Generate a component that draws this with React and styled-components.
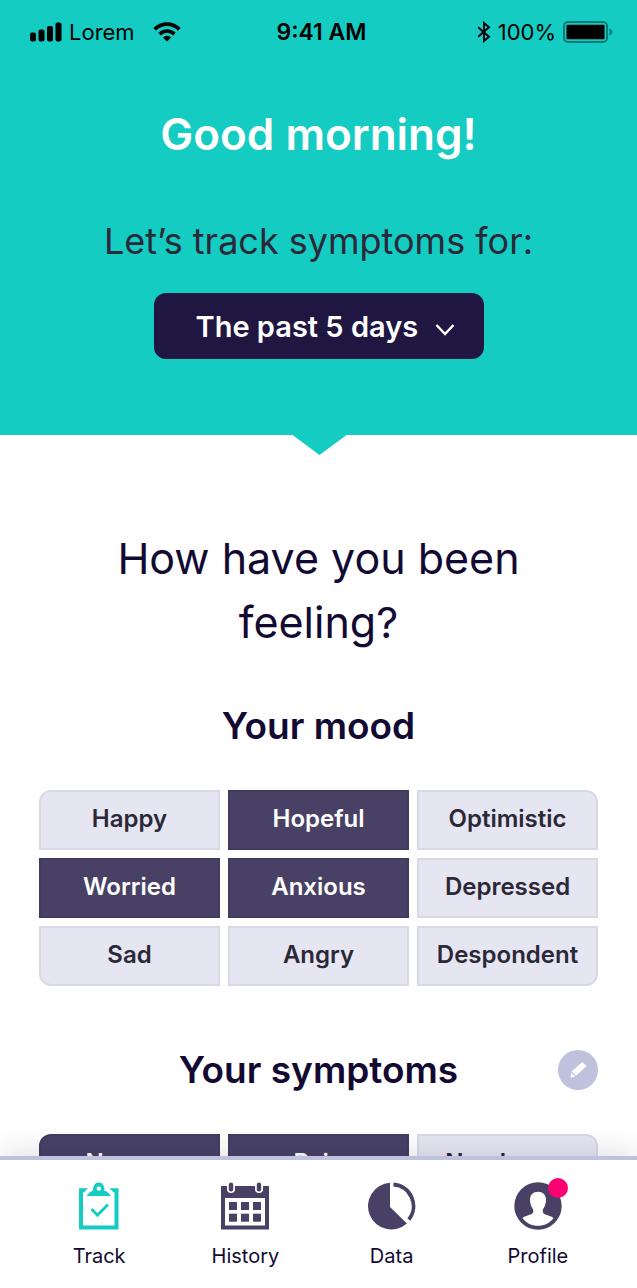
import React, { useState } from "react";
import styled, { createGlobalStyle } from "styled-components";

const color = {
  teal: "#14ccc2",
  ink: "#130a33",
  navy: "#1f1642",
  plum: "#484165",
  charcoal: "#2b2838",
  lilac: "#e6e6f2",
  line: "#d9d8e5",
  periwinkle: "#bfc2dc",
  pink: "#ff0073",
};

const GlobalStyle = createGlobalStyle`
  *, *::before, *::after { box-sizing: border-box; }
  body {
    margin: 0;
    background: #fff;
    color: ${color.ink};
    font-family: Inter, "Liberation Sans", sans-serif;
  }
  h1, h2, h3, p { margin: 0; }
  button, select { font: inherit; }
`;

const Screen = styled.div`
  display: flex;
  flex-direction: column;
  height: 100vh;
  background: #fff;
`;

const Scroller = styled.main`
  flex: 1;
  min-height: 0;
  overflow-y: auto;
  scrollbar-width: none;
`;

const Hero = styled.header`
  position: relative;
  display: flex;
  flex-direction: column;
  align-items: center;
  padding-bottom: 76px;
  background: ${color.teal};

  &::after {
    content: "";
    position: absolute;
    top: 100%;
    left: 50%;
    width: 54px;
    height: 20px;
    margin-left: -26px;
    background: ${color.teal};
    clip-path: polygon(0 0, 100% 0, 50% 100%);
  }
`;

const StatusBar = styled.div`
  align-self: stretch;
  display: grid;
  grid-template-columns: 1fr auto 1fr;
  align-items: center;
  height: 64px;
  padding: 0 24px 0 30px;
  color: #000;
  font-size: 22px;
  line-height: 32px;
`;

const StatusGroup = styled.div`
  display: flex;
  align-items: center;
  justify-content: ${(p) => (p.$end ? "flex-end" : "flex-start")};
  gap: 7px;
`;

const Carrier = styled.span`
  margin-right: 11px;
`;

const Clock = styled.time`
  font-size: 23px;
  font-weight: 600;
`;

const Greeting = styled.h1`
  margin-top: 42px;
  color: #fff;
  font-size: 44px;
  font-weight: 600;
  line-height: 56px;
`;

const Prompt = styled.label`
  margin-top: 55px;
  color: ${color.charcoal};
  font-size: 36px;
  line-height: 48px;
`;

const PeriodField = styled.div`
  position: relative;
  width: 330px;
  max-width: 100%;
  margin-top: 28px;
`;

const PeriodSelect = styled.select`
  appearance: none;
  display: block;
  width: 100%;
  height: 66px;
  padding: 0 60px 0 42px;
  border: 0;
  border-radius: 12px;
  background: ${color.navy};
  color: #fff;
  font-size: 29px;
  font-weight: 600;
`;

const PeriodChevron = styled.svg`
  position: absolute;
  top: 30px;
  right: 29px;
  pointer-events: none;
`;

const Content = styled.div`
  padding: 91px 39px 40px;
`;

const Question = styled.h2`
  max-width: 460px;
  margin: 0 auto 48px;
  font-size: 43px;
  font-weight: 400;
  line-height: 64px;
  text-align: center;
`;

const Section = styled.section`
  & + & {
    margin-top: 60px;
  }
`;

const SectionHead = styled.div`
  display: grid;
  grid-template-columns: 40px 1fr 40px;
  align-items: center;
  margin-bottom: 40px;
`;

const SectionTitle = styled.h3`
  grid-column: 2;
  font-size: 37px;
  font-weight: 600;
  line-height: 48px;
  text-align: center;
`;

const EditButton = styled.button`
  display: block;
  width: 40px;
  height: 40px;
  padding: 0;
  border: 0;
  border-radius: 50%;
  background: ${color.periwinkle};
`;

const ChipGrid = styled.div`
  display: grid;
  grid-template-columns: repeat(3, 1fr);
  gap: 8px;
`;

const Chip = styled.button`
  height: 60px;
  padding: 0 0 2px;
  border: 2px solid ${(p) => (p.$on ? "#433c60" : color.line)};
  background: ${(p) => (p.$on ? color.plum : color.lilac)};
  color: ${(p) => (p.$on ? "#fff" : color.charcoal)};
  font-size: 24px;
  font-weight: 600;
  line-height: 32px;

  &:nth-child(1) { border-top-left-radius: 12px; }
  &:nth-child(3) { border-top-right-radius: 12px; }
  &:nth-last-child(3) { border-bottom-left-radius: 12px; }
  &:last-child { border-bottom-right-radius: 12px; }
`;

const TabBar = styled.nav`
  position: relative;
  display: grid;
  grid-template-columns: repeat(4, 1fr);
  padding: 22px 26px 18px;
  border-top: 4px solid ${color.periwinkle};
  background: #fff;
  box-shadow: 0 0 30px rgba(31, 22, 66, 0.16);
`;

const Tab = styled.a`
  display: flex;
  flex-direction: column;
  align-items: center;
  gap: 12px;
  color: ${color.ink};
  font-size: 20px;
  line-height: 28px;
  text-decoration: none;
`;

const TabIcon = styled.span`
  position: relative;
  display: block;
  width: 48px;
  height: 48px;
  color: ${(p) => (p.$active ? color.teal : color.plum)};

  svg { display: block; }
`;

const Dot = styled.span`
  position: absolute;
  top: -4px;
  right: -6px;
  width: 20px;
  height: 20px;
  border-radius: 50%;
  background: ${color.pink};
`;

const SignalIcon = () => (
  <svg width="32" height="20" viewBox="0 0 32 20" aria-hidden="true">
    <rect x="0" y="10.5" width="6" height="9" rx="2" />
    <rect x="8.5" y="7.5" width="6" height="12" rx="2" />
    <rect x="17" y="4" width="6" height="15.5" rx="2" />
    <rect x="25.5" y="0.5" width="6" height="19" rx="2" />
  </svg>
);

const WifiIcon = () => (
  <svg width="28" height="20" viewBox="0 0 28 20" aria-hidden="true">
    <g fill="none" stroke="#000">
      <path d="M1.7 7.3A17.3 17.3 0 0 1 26.3 7.3" strokeWidth="3.8" />
      <path d="M6.6 12.1A10.5 10.5 0 0 1 21.4 12.1" strokeWidth="3.6" />
    </g>
    <path d="M14 19.5L9.9 15.5A5.7 5.7 0 0 1 18.1 15.5Z" />
  </svg>
);

const BluetoothIcon = () => (
  <svg width="14" height="22" viewBox="0 0 14 22" aria-hidden="true">
    <path
      d="M1.2 6.2L12 15.7L7 20V2L12 6.3L1.2 15.8"
      fill="none"
      stroke="#000"
      strokeWidth="1.9"
    />
  </svg>
);

const BatteryIcon = () => (
  <svg width="50" height="22" viewBox="0 0 50 22" aria-hidden="true">
    <rect x="1" y="1" width="43" height="20" rx="4" fill="none" stroke="#000" strokeOpacity="0.4" strokeWidth="2" />
    <rect x="3.5" y="3.7" width="38" height="14.6" rx="1" />
    <path d="M46.5 7.5C50.2 8.5 50.2 13.5 46.5 14.5Z" fillOpacity="0.4" />
  </svg>
);

const PencilIcon = () => (
  <svg width="40" height="40" viewBox="0 0 40 40" fill="#fff" aria-hidden="true">
    <path d="M13.7 21.4L23.6 12.4Q24.2 11.9 24.8 12.4L28 15.3Q28.5 15.9 28 16.4L18 25.7Z" />
    <path d="M12.9 22.6L17.2 26.7L13.4 27.4Q12.8 27.4 12.8 26.8Z" />
  </svg>
);

const TrackIcon = () => (
  <svg width="48" height="48" viewBox="0 0 48 48" fill="currentColor" aria-hidden="true">
    <path d="M4 6.2H13L9 10.2H8V43.4H39.5V10.2H38.5L34.5 6.2H43.5V47.4H4Z" />
    <path
      fillRule="evenodd"
      d="M11.500 14Q15 9.300 18 8.700C18 3.800 20 0.600 23.800 0.600S29.500 3.800 29.500 8.700Q32.500 9.300 36 14ZM23.800 4.400A2.200 2.200 0 1 0 23.800 8.800A2.200 2.200 0 1 0 23.800 4.400Z"
    />
    <path d="M16.5 27L22.5 33.3L33 22.5" fill="none" stroke="currentColor" strokeWidth="2.8" />
  </svg>
);

const HistoryIcon = () => (
  <svg width="48" height="48" viewBox="0 0 48 48" fill="currentColor" aria-hidden="true">
    <path fillRule="evenodd" d="M0 4H48V47.4H0ZM4 16V43.4H44V16Z" />
    <g fill="#fff">
      <rect x="6" y="-2" width="8" height="13" rx="4" />
      <rect x="34" y="-2" width="8" height="13" rx="4" />
    </g>
    <rect x="7.8" y="0.5" width="4.4" height="9" rx="2.2" />
    <rect x="35.8" y="0.5" width="4.4" height="9" rx="2.2" />
    {[8, 20, 32].map((x) =>
      [20, 31.7].map((y) => <rect key={`${x}-${y}`} x={x} y={y} width="8" height="8" />)
    )}
  </svg>
);

const DataIcon = () => (
  <svg width="48" height="48" viewBox="0 0 48 48" aria-hidden="true">
    <path d="M22 0.7A23.4 23.4 0 1 0 38.9 41.6L22 25Z" fill="currentColor" />
    <path d="M25.5 2.5A21.6 21.6 0 0 1 40.8 37.5" fill="none" stroke="currentColor" strokeWidth="3.8" />
  </svg>
);

const ProfileIcon = () => (
  <svg width="48" height="48" viewBox="0 0 48 48" aria-hidden="true">
    <circle cx="24" cy="24" r="23.7" fill="currentColor" />
    <path
      d="M24 9.8C28.9 9.8 32 12.8 32 17.8C32 22 30.4 25.5 28.8 27.6V30.2C30 33.4 37.5 33.3 39.5 36.2C35.5 41.2 30.5 43.7 24 43.7S12.5 41.2 8.5 36.2C10.5 33.3 18 33.4 19.2 30.2V27.6C17.6 25.5 16 22 16 17.8C16 12.8 19.1 9.8 24 9.8Z"
      fill="#fff"
    />
  </svg>
);

const moods = ["Happy", "Hopeful", "Optimistic", "Worried", "Anxious", "Depressed", "Sad", "Angry", "Despondent"];
const symptoms = ["Nausea", "Pain", "Numbness"];

const tabs = [
  { label: "Track", Icon: TrackIcon, active: true },
  { label: "History", Icon: HistoryIcon },
  { label: "Data", Icon: DataIcon },
  { label: "Profile", Icon: ProfileIcon, alert: true },
];

function ChipGroup({ label, options, initial }) {
  const [selected, setSelected] = useState(initial);
  const toggle = (name) =>
    setSelected((now) => (now.includes(name) ? now.filter((n) => n !== name) : [...now, name]));

  return (
    <ChipGrid role="group" aria-label={label}>
      {options.map((name) => {
        const on = selected.includes(name);
        return (
          <Chip key={name} type="button" $on={on} aria-pressed={on} onClick={() => toggle(name)}>
            {name}
          </Chip>
        );
      })}
    </ChipGrid>
  );
}

export default function App() {
  return (
    <Screen>
      <GlobalStyle />
      <Scroller>
        <Hero>
          <StatusBar>
            <StatusGroup>
              <SignalIcon />
              <Carrier>Lorem</Carrier>
              <WifiIcon />
            </StatusGroup>
            <Clock>9:41 AM</Clock>
            <StatusGroup $end>
              <BluetoothIcon />
              <span>100%</span>
              <BatteryIcon />
            </StatusGroup>
          </StatusBar>
          <Greeting>Good morning!</Greeting>
          <Prompt htmlFor="period">Let’s track symptoms for:</Prompt>
          <PeriodField>
            <PeriodSelect id="period" defaultValue="5">
              <option value="5">The past 5 days</option>
            </PeriodSelect>
            <PeriodChevron width="20" height="14" viewBox="0 0 20 14" aria-hidden="true">
              <path d="M1.5 2L10 11L18.5 2" fill="none" stroke="#fff" strokeWidth="2.5" />
            </PeriodChevron>
          </PeriodField>
        </Hero>
        <Content>
          <Question>How have you been feeling?</Question>
          <Section>
            <SectionHead>
              <SectionTitle>Your mood</SectionTitle>
            </SectionHead>
            <ChipGroup label="Your mood" options={moods} initial={["Hopeful", "Worried", "Anxious"]} />
          </Section>
          <Section>
            <SectionHead>
              <SectionTitle>Your symptoms</SectionTitle>
              <EditButton type="button" aria-label="Edit symptoms">
                <PencilIcon />
              </EditButton>
            </SectionHead>
            <ChipGroup label="Your symptoms" options={symptoms} initial={["Nausea", "Pain"]} />
          </Section>
        </Content>
      </Scroller>
      <TabBar>
        {tabs.map(({ label, Icon, active, alert }) => (
          <Tab key={label} href={`#${label.toLowerCase()}`} aria-current={active ? "page" : undefined}>
            <TabIcon $active={active}>
              <Icon />
              {alert && <Dot />}
            </TabIcon>
            {label}
          </Tab>
        ))}
      </TabBar>
    </Screen>
  );
}
